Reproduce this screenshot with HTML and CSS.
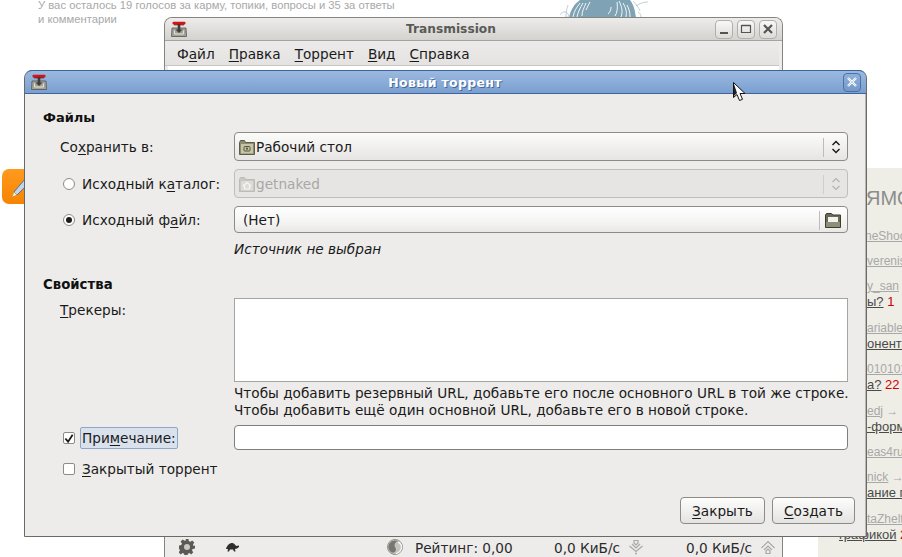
FILE: index.html
```html
<!DOCTYPE html>
<html lang="ru">
<head>
<meta charset="utf-8">
<title>Новый торрент</title>
<link rel="stylesheet" href="styles.css">
</head>
<body>
<svg class="defs" width="0" height="0" aria-hidden="true">
  <defs>
    <symbol id="app" viewBox="0 0 16 16">
      <path d="M1 7h14l.5 8.500H.5z" fill="#a3a299" stroke="#55544e" stroke-width=".8"/>
      <path d="M3.500 9.500v3.500h9V9.500" fill="none" stroke="#e2e1da" stroke-width="1"/>
      <path d="M6.700 3h2.600v5.500h2.200L8 12 4.500 8.500h2.200z" fill="#3f3f3c"/>
      <rect x="1.500" y=".8" width="13" height="2.600" rx="1" fill="#d11414"/>
      <rect x="3" y="3.300" width="10" height="1" fill="#7e1010"/>
    </symbol>
    <symbol id="folder" viewBox="0 0 16 16">
      <path d="M.5 3.500 1.500 1.500h4l1 2h9v12H.5z" fill="#8d8d6e" stroke="#5c5c4a"/>
      <rect x="2" y="5" width="12" height="9.500" fill="#c6c6a6"/>
      <rect x="5" y="7.500" width="6" height="4.500" rx=".8" fill="none" stroke="#55553f"/>
      <circle cx="8" cy="9.700" r="1.100" fill="#55553f"/>
    </symbol>
    <symbol id="home" viewBox="0 0 16 16">
      <path d="M.5 3.500 1.500 1.500h4l1 2h9v12H.5z" fill="#c9c8c3" stroke="#bcbbb6"/>
      <rect x="2" y="5" width="12" height="9.500" fill="#dcdbd7"/>
      <path d="M4 10l4-3.500 4 3.500M5.500 9.500v3.500h5V9.500" fill="none" stroke="#f6f6f4" stroke-width="1.200"/>
    </symbol>
  </defs>
</svg>

<div class="page">
  <p class="votes">У вас осталось 19 голосов за карму, топики, вопросы и 35 за ответы<br>и комментарии</p>
  <svg class="scribble" width="88" height="18" viewBox="0 0 88 18" aria-hidden="true">
    <path d="M9 18C10 11 14 4 20 0h50c4 5 5 11 6 18z" fill="#7fa3b5"/>
    <g fill="none" stroke="#fff" stroke-width=".9">
      <path d="M13 17c1-6 4-10 7-14M17 17c1-5 3-9 6-14M22 16c0-5 2-8 4-13M26 10c1-3 3-5 4-8M61 17c2-5 1-10-2-16M66 17c1-5 0-9-3-14M70 17c0-5-1-8-3-12M55 16c2-3 3-8 2-14M48 14c2-2 3-4 3-7"/>
    </g>
    <path d="M0 15c2-4 6-4 8-1s-1 4-3 2M8 5c-1 3-2 7-2 11M76 6c4-3 8-4 12-4M78 12c2 1 3 3 3 5M73 1c3 3 6 7 7 10" fill="none" stroke="#a4bdca" stroke-width=".7"/>
  </svg>
  <div class="badge">
    <svg width="24" height="24" viewBox="0 0 24 24" aria-hidden="true">
      <path d="M10 17 21 4l4 4-12 12z" fill="#c3d4e8" stroke="#54749e"/>
      <path d="M10 17l3 3-5 2z" fill="#fff3c8" stroke="#b08b4f" stroke-width=".5"/>
    </svg>
  </div>

  <aside class="side">
    <div class="side-head">ЯМОЙ ЭФИР</div>
    <a class="s-user s1">neShooter</a>
    <a class="s-user s2">verenis</a>
    <a class="s-user s2">y_san</a>
    <div class="s-line"><a>ы?</a> <b>1</b></div>
    <a class="s-user s2">ariable</a>
    <div class="s-line"><a>оненто</a></div>
    <a class="s-user s2">0101010</a>
    <div class="s-line"><a>а?</a> <b>22</b></div>
    <div class="s-user s2"><a>edj</a> <span>→</span></div>
    <div class="s-line"><a>-форм</a></div>
    <a class="s-user s2">eas4rus</a>
    <div class="s-user s2"><a>nick</a> <span>→</span></div>
    <div class="s-line"><a>ание п</a></div>
    <a class="s-user s2">taZhelt</a>
    <div class="s-line s-full"><a>графикой</a> <b>2</b></div>
  </aside>

  <section class="win main">
    <header class="tbar">
      <svg class="appicon"><use href="#app"/></svg>
      <span class="ttl">Transmission</span>
      <div class="wbtns">
        <span class="wbtn"><svg width="14" height="14" viewBox="0 0 14 14"><path d="M3 11h8" stroke="#55544f" stroke-width="2"/></svg></span>
        <span class="wbtn"><svg width="14" height="14" viewBox="0 0 14 14"><path d="M2.500 3.500h9v7h-9z" fill="none" stroke="#55544f" stroke-width="1.200"/><path d="M2.500 3.500h9" stroke="#55544f" stroke-width="1.500"/></svg></span>
        <span class="wbtn"><svg width="14" height="14" viewBox="0 0 14 14"><path d="m3 3 8 8M11 3l-8 8" stroke="#55544f" stroke-width="2.200"/></svg></span>
      </div>
    </header>
    <nav class="menu">
      <span>Ф<u>а</u>йл</span><span><u>П</u>равка</span><span><u>Т</u>оррент</span><span><u>В</u>ид</span><span><u>С</u>правка</span>
    </nav>
    <div class="content"></div>
    <footer class="status">
      <svg class="st-gear" width="16" height="16" viewBox="0 0 16 16" aria-hidden="true">
        <path d="M6.500 0h3l.4 2.200 1.500.6L13.200 1.500l2.100 2.100-1.300 1.900.6 1.500L16 6.500v3l-2.400.5-.6 1.500 1.300 1.800-2.100 2.100-1.800-1.300-1.500.6-.4 2.300h-3l-.4-2.300-1.500-.6-1.900 1.300-2.100-2.100 1.300-1.800-.6-1.500L0 9.500v-3L2.300 6l.6-1.500-1.300-1.900 2.100-2.100 1.900 1.300 1.500-.6z" fill="#5b5b55"/>
        <circle cx="8" cy="8" r="3" fill="#c9c8c3"/>
      </svg>
      <svg class="st-turtle" width="14" height="9" viewBox="0 0 14 9" aria-hidden="true">
        <path d="M1 6C2 2 5 0 7 0s3.500 2 4 3l3-.5V4l-2 1.500L10 6l.5 2.500H9L8 6.500H5L4 8.500H2.500L3 6z" fill="#2e2e2b"/>
      </svg>
      <svg class="st-ratio" width="16" height="16" viewBox="0 0 17 17" aria-hidden="true">
        <circle cx="8.500" cy="8.500" r="8" fill="#c4c3be" stroke="#8f8e89"/>
        <path d="M8.500 1.500C5 1.500 1.500 4.500 1.500 8.500c0 3 2.500 6 5 6 2 0 3-1.500 3-3.500S8 9 8 7s1.500-4 3.500-4.500C10.500 2 9.500 1.500 8.500 1.500z" fill="#777771"/>
        <path d="M12 3c2 1.500 3.500 3.500 3.500 5.500 0 3-2.500 6.500-6 7" fill="none" stroke="#f6f6f4" stroke-width="1.500"/>
      </svg>
      <span class="st-rate">Рейтинг: 0,00</span>
      <span class="st-speed">0,0 КиБ/с</span>
      <svg class="st-arrow" width="16" height="16" viewBox="0 0 16 16" aria-hidden="true">
        <g fill="none" stroke="#a9a8a2" stroke-width="1.200"><path d="M1.500 7 8 12.500 14.500 7"/><path d="M4 5l4 4 4-4"/><path d="M6 1.500h4V4l-2 2-2-2z"/></g>
        <circle cx="8" cy="14.500" r="1" fill="#a9a8a2"/>
      </svg>
      <span class="st-speed st-up">0,0 КиБ/с</span>
      <svg class="st-arrow" width="16" height="16" viewBox="0 0 16 16" aria-hidden="true">
        <g fill="none" stroke="#a9a8a2" stroke-width="1.200"><path d="M1.500 9 8 2.500 14.500 9"/><path d="M4 11l4-4 4 4"/><path d="M6 14.500h4V12l-2-2-2 2z"/></g>
      </svg>
    </footer>
  </section>

  <section class="win dialog">
    <header class="dbar">
      <svg class="appicon"><use href="#app"/></svg>
      <span class="dttl">Новый торрент</span>
      <span class="dclose"><svg width="14" height="14" viewBox="0 0 14 14"><path d="m3 3 8 8M11 3l-8 8" stroke="#fff" stroke-width="2.400"/><path d="m3 3 8 8M11 3l-8 8" stroke="#c4d3e6" stroke-width="1"/></svg></span>
    </header>
    <div class="dbody">
      <h2 class="sect s-files">Файлы</h2>

      <div class="row r-save">
        <label class="lab lab-in">Со<u>х</u>ранить в:</label>
        <div class="combo">
          <svg class="ico"><use href="#folder"/></svg>
          <span class="val">Рабочий стол</span>
          <span class="sep"></span>
          <svg class="updown" width="10" height="16" viewBox="0 0 10 16"><path d="M1.500 6 5 2.500 8.500 6M1.500 10 5 13.500 8.500 10" fill="none" stroke="#1c1c1c" stroke-width="1.500"/></svg>
        </div>
      </div>

      <div class="row r-dir">
        <label class="lab"><span class="radio"></span>Исходный к<u>а</u>талог:</label>
        <div class="combo off">
          <svg class="ico"><use href="#home"/></svg>
          <span class="val">getnaked</span>
          <span class="sep"></span>
          <svg class="updown" width="10" height="16" viewBox="0 0 10 16"><path d="M1.500 6 5 2.500 8.500 6M1.500 10 5 13.500 8.500 10" fill="none" stroke="#b5b4b0" stroke-width="1.200"/></svg>
        </div>
      </div>

      <div class="row r-file">
        <label class="lab"><span class="radio on"></span>Исходный ф<u>а</u>йл:</label>
        <div class="combo filebtn">
          <span class="val val-pad">(Нет)</span>
          <span class="sep"></span>
          <svg class="open" width="16" height="15" viewBox="0 0 16 15"><path d="M.5 2 1.500.5h5L8 2h7.500v12.500H.5z" fill="#6b6b55" stroke="#3d3d30"/><rect x="3" y="4" width="10" height="5" fill="#f2f2ee"/><path d="M1 9h14v5H1z" fill="#8f8f78"/></svg>
        </div>
      </div>

      <div class="row r-hint"><em class="hint">Источник не выбран</em></div>

      <h2 class="sect s-props">Свойства</h2>

      <div class="row r-track">
        <label class="lab lab-in lab-top"><u>Т</u>рекеры:</label>
        <div class="area"></div>
      </div>

      <div class="row r-note">
        <p class="note">Чтобы добавить резервный URL, добавьте его после основного URL в той же строке.<br>Чтобы добавить ещё один основной URL, добавьте его в новой строке.</p>
      </div>

      <div class="row r-comment">
        <label class="lab"><span class="check on"><svg width="11" height="11" viewBox="0 0 11 11"><path d="m1.500 5.500 3 3.500L9.500 1.500" fill="none" stroke="#1c1c1c" stroke-width="2"/></svg></span><span class="focus">При<u>м</u>ечание:</span></label>
        <div class="entry"></div>
      </div>

      <div class="row r-private">
        <label class="lab lab-wide"><span class="check"></span><span><u>З</u>акрытый торрент</span></label>
      </div>

      <div class="actions">
        <button class="btn b-close" type="button"><u>З</u>акрыть</button>
        <button class="btn b-make" type="button"><u>С</u>оздать</button>
      </div>
    </div>
  </section>

  <svg class="cursor" width="14" height="21" viewBox="0 0 14 21" aria-hidden="true">
    <path d="M.5.500v15l3.500-3 2.500 6 3-1.200-2.500-5.800H12z" fill="#fff" stroke="#111"/>
    <path d="M1 2v12l3-3z" fill="#222"/>
  </svg>
</div>
</body>
</html>
```
FILE: styles.css
```css
* { box-sizing: border-box; }
html, body { margin: 0; padding: 0; background: #fff; }
.defs { position: absolute; }
.page {
  position: relative;
  width: 902px;
  height: 557px;
  overflow: hidden;
  background: #fff;
  font-family: "DejaVu Sans", sans-serif;
  font-size: 13.650px;
  color: #1a1a1a;
}
u { text-underline-offset: 2px; text-decoration-thickness: 1px; }

.votes {
  position: absolute;
  left: 38px;
  top: -2px;
  margin: 0;
  font: 11.250px/14px "Liberation Sans", sans-serif;
  color: #a8a8a8;
  white-space: nowrap;
}
.scribble { position: absolute; left: 560px; top: 0; }
.badge {
  position: absolute;
  left: 2px;
  top: 169px;
  width: 40px;
  height: 35px;
  padding: 6px 0 0 2px;
  border-radius: 7px;
  background: linear-gradient(#ff9a1f, #f78400);
}

.side {
  position: absolute;
  left: 818px;
  top: 168px;
  width: 84px;
  height: 389px;
  padding: 19px 0 0 49px;
  background: #eeeee6;
  font: 12px/16px "Liberation Sans", sans-serif;
  color: #a8a8a8;
  white-space: nowrap;
  overflow: hidden;
}
.side a { text-decoration: underline; }
.side-head { font-size: 20px; line-height: 22px; color: #8d8d8d; margin-left: -1px; }
.s-user { display: block; }
.s1 { margin-top: 19px; margin-left: -2px; }
.s2 { margin-top: 9px; }
.s-line { color: #4a4a4a; font-size: 13px; line-height: 16.500px; }
.s-line b { font-weight: 400; color: #d00000; }
.s-full { margin-left: -28px; }

.win { position: absolute; }
.main {
  left: 164px;
  top: 17px;
  width: 619px;
  height: 540px;
  display: flex;
  flex-direction: column;
  background: #edecea;
  border: 1px solid #85847f;
  border-bottom: 0;
  border-radius: 8px 8px 0 0;
}
.tbar {
  flex: none;
  height: 23px;
  display: flex;
  align-items: center;
  padding-left: 6px;
  background: linear-gradient(#edecea, #d3d2cf);
  border-bottom: 1px solid #a4a39f;
  border-radius: 7px 7px 0 0;
}
.appicon { width: 16px; height: 16px; flex: none; }
.ttl {
  flex: 1;
  text-align: center;
  font-weight: 700;
  font-size: 12.200px;
  color: #5a5a56;
}
.wbtns { display: flex; gap: 4px; padding-right: 5px; }
.wbtn {
  width: 18px;
  height: 19px;
  display: flex;
  align-items: center;
  justify-content: center;
  border: 1px solid #b0afab;
  border-radius: 4px;
  background: linear-gradient(#f8f8f7, #dcdbd8);
}
.menu {
  flex: none;
  height: 25px;
  margin-right: 3px;
  display: flex;
  align-items: center;
  gap: 14px;
  padding: 2px 0 0 12px;
  border-bottom: 1px solid #c8c7c3;
  background: linear-gradient(#ecebe9, #e4e3e1);
}
.content { flex: 1; margin: 0 3px; background: #fff; }
.status {
  flex: none;
  height: 20px;
  display: flex;
  align-items: center;
  padding-left: 14px;
  color: #2a2a2a;
}
.st-gear { margin-right: 30px; }
.st-turtle { margin-right: 148px; }
.st-rate { margin-left: 12px; width: 139px; padding-top: 1px; }
.st-speed { width: 74px; padding-top: 1px; }
.st-up { margin-left: 42px; }

.dialog {
  left: 24px;
  top: 70px;
  width: 843px;
  height: 467px;
  display: flex;
  flex-direction: column;
  background: #edecea;
  border: 1px solid #6a6a66;
  border-radius: 8px 8px 0 0;
  box-shadow: inset -1px 0 0 #b9b8b4;
}
.dbar {
  flex: none;
  height: 24px;
  display: flex;
  align-items: center;
  padding-left: 6px;
  margin-top: -1px;
  background: linear-gradient(#9bb9df, #7a9fd0);
  border: 1px solid #3f6598;
  border-width: 1px 0;
  border-radius: 7px 7px 0 0;
}
.dttl {
  flex: 1;
  text-align: center;
  font-weight: 700;
  font-size: 12.500px;
  letter-spacing: .3px;
  color: #fff;
  text-shadow: 1px 1px 0 #46699a;
}
.dclose {
  width: 18px;
  height: 19px;
  margin-right: 5px;
  display: flex;
  align-items: center;
  justify-content: center;
  border: 1px solid #4b72a6;
  border-radius: 4px;
  background: linear-gradient(#8fb0da, #7398c9);
}
.dbody {
  flex: 1;
  display: flex;
  flex-direction: column;
  padding: 15px 18px 0;
}
.sect { margin: 0; font-size: 13px; line-height: 16px; font-weight: 700; color: #111; padding-top: 1px; height: 16px; }
.s-props { margin-top: 19px; font-size: 13.300px; }
.row { display: flex; padding-left: 20px; }
.lab {
  width: 171px;
  flex: none;
  display: flex;
  align-items: center;
  line-height: 16px;
  padding-top: 1px;
  white-space: nowrap;
}
.lab-in { margin-left: -3px; width: 174px; }
.lab-top { align-items: flex-start; padding-top: 4px; }
.r-save { margin-top: 7px; height: 29px; }
.r-dir { margin-top: 8px; height: 29px; }
.r-file { margin-top: 8px; height: 27px; }
.r-hint { margin-top: 8px; padding-left: 191px; line-height: 16px; height: 16px; }
.hint { font-style: oblique; }
.r-track { margin-top: 6px; height: 84px; }
.r-note { padding-left: 171px; margin-top: 3px; margin-left: 20px; }
.note { margin: 0; line-height: 17px; white-space: nowrap; }
.r-comment { margin-top: 6px; height: 25px; }
.r-private { margin-top: 10px; height: 16px; }
.combo {
  flex: 1;
  display: flex;
  align-items: center;
  padding: 1px 5px 0 4px;
  border: 1px solid #8c8b86;
  border-radius: 4px;
  background: linear-gradient(#fbfbfa, #e6e5e3);
}
.combo .ico { width: 16px; height: 16px; flex: none; }
.val { flex: 1; padding-left: 1px; }
.val-pad { padding-left: 4px; }
.sep { width: 1px; height: 19px; background: #bdbcb8; margin-right: 7px; }
.updown { flex: none; margin-right: 1px; }
.off { border-color: #bfbeba; background: #e6e5e3; color: #a9a8a4; }
.off .sep { background: #cfcec9; }
.filebtn { background: linear-gradient(#fff, #f4f4f3 60%, #e9e8e6); }
.filebtn .sep { margin-right: 5px; }
.open { flex: none; margin-right: 1px; }
.radio, .check {
  flex: none;
  width: 12px;
  height: 12px;
  margin: 0 7px 0 0;
  background: #fff;
  border: 1px solid #8c8b86;
  display: flex;
  align-items: center;
  justify-content: center;
}
.radio { border-radius: 50%; }
.radio.on::after { content: ""; width: 6px; height: 6px; border-radius: 50%; background: #1c1c1c; }
.check { border-radius: 2px; margin-right: 5px; }
.focus {
  padding: 2px 1px;
  line-height: 16px;
  border: 1px solid #8ea8cb;
  border-radius: 2px;
  background: #d9e1ec;
}
.lab-wide span:last-child { margin-left: 2px; }
.area { flex: 1; background: #fff; border: 1px solid #a5a4a0; }
.entry { flex: 1; background: #fff; border: 1px solid #7f7e79; border-radius: 4px; }
.actions {
  margin-top: 21px;
  margin-right: -7px;
  display: flex;
  justify-content: flex-end;
  gap: 7px;
}
.btn {
  width: 85px;
  height: 27px;
  padding: 1px 0 0;
  font: inherit;
  color: inherit;
  border: 1px solid #8c8b86;
  border-radius: 4px;
  background: linear-gradient(#fdfdfc, #e4e3e1);
}
.b-make { width: 83px; }

.cursor { position: absolute; left: 733px; top: 82px; }
```
